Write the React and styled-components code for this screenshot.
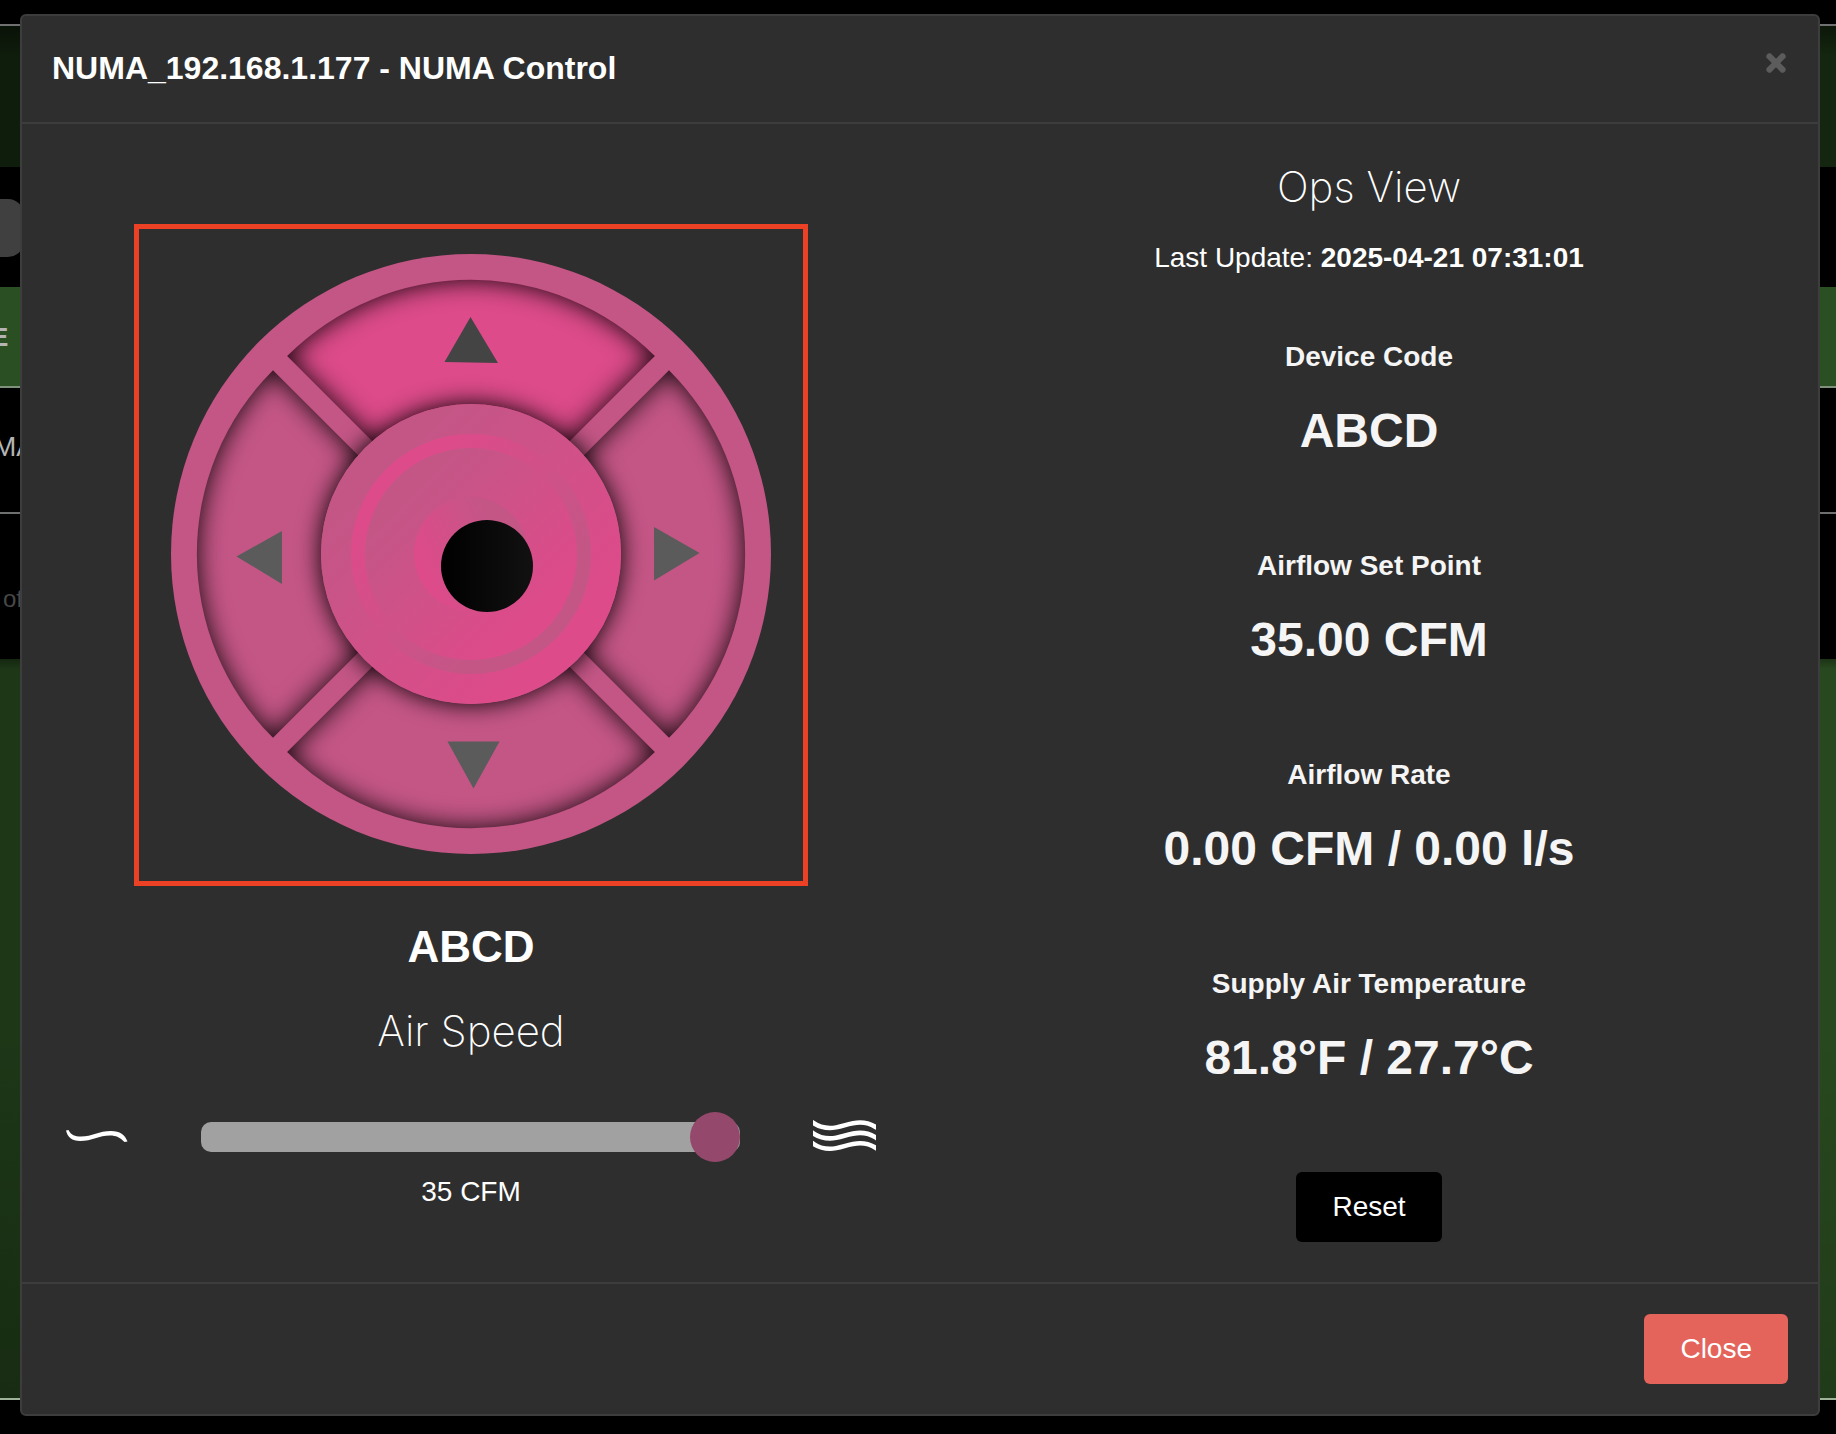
import React, { useState } from "react";
import styled, { createGlobalStyle } from "styled-components";

const GlobalStyle = createGlobalStyle`
  * { box-sizing: border-box; }
  body {
    margin: 0;
    background: #000;
    color: #fff;
    font-family: "Liberation Sans", Arial, sans-serif;
    font-size: 28px;
  }
  button, input { font: inherit; }
  h1, h2, h3, p, dl, dd { margin: 0; }
`;

const dull = "#c45686";
const vivid = "#dd4b8a";

const Stage = styled.div`
  display: grid;
  grid-template-columns: minmax(0, 1fr);
  min-height: 100vh;
`;

/* Dimmed page behind the dialog */
const Backdrop = styled.div`
  grid-area: 1 / 1;
  display: flex;
  flex-direction: column;
  overflow: hidden;
  white-space: nowrap;
  padding: 24px 0 34px;
`;

const Banner = styled.div`
  height: 143px;
  border-top: 2px solid #707070;
  background: linear-gradient(rgba(0, 0, 0, 0.4), rgba(0, 0, 0, 0) 30px),
    linear-gradient(90deg, #0f1d0c, #14260f);
`;

const Toolbar = styled.div`
  height: 120px;
  display: flex;
  align-items: center;
  padding-top: 2px;
`;

const Pill = styled.div`
  width: 24px;
  height: 58px;
  border-radius: 0 16px 16px 0;
  background: #404040;
`;

const HeadRow = styled.div`
  height: 101px;
  border-bottom: 2px solid #7f907b;
  background: #2a4f22;
  color: #b4b4b4;
  font-size: 26px;
  font-weight: bold;
  line-height: 100px;
  text-indent: -9px;
`;

const DataRow = styled.div`
  height: 126px;
  border-bottom: 2px solid #6e7070;
  color: #b4b4b4;
  line-height: 118px;
  text-indent: -7px;
`;

const PagerRow = styled.div`
  height: 145px;
  color: #484848;
  font-size: 24px;
  line-height: 170px;
  text-indent: 3px;
`;

const Lawn = styled.div`
  flex: 1;
  border-bottom: 2px solid #9fb39a;
  background: linear-gradient(rgba(0, 0, 0, 0.3), rgba(0, 0, 0, 0) 10px),
    linear-gradient(rgba(0, 0, 0, 0) 50%, rgba(0, 0, 0, 0.2)),
    linear-gradient(90deg, #1d3717, #28491f);
`;

const Dialog = styled.section`
  grid-area: 1 / 1;
  align-self: start;
  margin: 14px 16px 18px 20px;
  border: 2px solid #3d3d3d;
  border-radius: 6px;
  background: #2e2e2e;
`;

const Header = styled.header`
  display: flex;
  justify-content: space-between;
  align-items: flex-start;
  padding: 30px 30px 32px;
  border-bottom: 2px solid #3d3d3d;
`;

const Title = styled.h1`
  font-size: 32px;
  line-height: 44px;
`;

const DismissButton = styled.button`
  display: flex;
  padding: 5px 0;
  border: 0;
  background: none;
  color: #5c5c5c;
  cursor: pointer;
`;

const Body = styled.div`
  display: grid;
  grid-template-columns: 1fr 1fr;
`;

const ControlColumn = styled.div`
  display: flex;
  flex-direction: column;
  align-items: center;
  padding: 100px 44px 40px;
`;

const OpsColumn = styled.div`
  display: flex;
  flex-direction: column;
  align-items: center;
  padding: 33px 44px 40px;
`;

const DialFrame = styled.div`
  display: grid;
  justify-items: center;
  align-items: start;
  width: 674px;
  height: 662px;
  padding-top: 25px;
  border: 5px solid #ec4125;
`;

const Dial = styled.div`
  display: grid;
  place-items: center;
  width: 600px;
  height: 600px;
  border-radius: 50%;
  background: ${dull};
`;

const Pads = styled.div`
  grid-area: 1 / 1;
  display: grid;
  grid-template-columns: 260px 260px;
  grid-auto-rows: 260px;
  gap: 20px;
  transform: rotate(45deg);
`;

const Pad = styled.button`
  display: grid;
  place-items: center;
  padding: 0 22px 22px 0;
  border: 0;
  border-radius: 260px 0 0 0;
  background: ${(p) => (p.$active ? vivid : dull)};
  color: ${(p) => (p.$active ? "#444" : "#5b5b5b")};
  box-shadow: inset 0 0 26px rgba(0, 0, 0, 0.95);
  transform: rotate(${(p) => p.$turn}deg);
  cursor: pointer;
`;

const Arrow = styled.svg`
  overflow: visible;
  transform: rotate(-45deg);
`;

const Hub = styled.button`
  grid-area: 1 / 1;
  z-index: 1;
  display: block;
  width: 300px;
  height: 300px;
  padding: 0;
  border: 0;
  border-radius: 50%;
  background: none;
  box-shadow: 0 0 24px #000;
  cursor: pointer;
`;

const HubDrawing = styled.svg`
  display: block;
`;

const DeviceName = styled.h2`
  margin-top: 31px;
  font-size: 44px;
  line-height: 60px;
`;

const ThinHeading = styled.h2`
  font-family: Inter, "Liberation Sans", sans-serif;
  font-size: 42px;
  font-weight: 200;
  line-height: 60px;
`;

const SpeedHeading = styled(ThinHeading)`
  margin-top: 24px;
`;

const SliderRow = styled.div`
  align-self: stretch;
  display: flex;
  align-items: center;
  gap: 73px;
  height: 50px;
  margin: 51px 0 10px;
`;

const Slider = styled.input`
  appearance: none;
  flex: 1;
  min-width: 0;
  height: 30px;
  margin: 0;
  border-radius: 10px;
  background: #a1a1a1;
  &::-webkit-slider-thumb {
    appearance: none;
    width: 50px;
    height: 50px;
    border-radius: 50%;
    background: #94486b;
  }
`;

const Line = styled.p`
  line-height: 40px;
`;

const Updated = styled(Line)`
  margin-top: 21px;
`;

const Stats = styled.dl`
  display: flex;
  flex-direction: column;
  gap: 85px;
  padding: 59px 0 84px;
  color: #f5f5f5;
  font-weight: bold;
  text-align: center;
`;

const Label = styled.dt`
  line-height: 40px;
`;

const Value = styled.dd`
  margin-top: 24px;
  font-size: 48px;
  line-height: 60px;
`;

const Button = styled.button`
  height: 70px;
  padding: 0 36px;
  border: 0;
  border-radius: 6px;
  background: ${(p) => (p.$danger ? "#e4645c" : "#000")};
  color: #fff;
  cursor: pointer;
`;

const Footer = styled.footer`
  display: flex;
  justify-content: flex-end;
  padding: 30px;
  border-top: 2px solid #3d3d3d;
`;

const pads = [
  { name: "Up", turn: 0, points: "29.5,6.5 57,52.5 3.5,51.5" },
  { name: "Right", turn: 90, points: "29,15 56.5,60.5 3,60.5" },
  { name: "Left", turn: 270, points: "27.5,9 53,54.5 0,54.5" },
  { name: "Down", turn: 180, points: "27.5,9 53.5,56 1.5,56" },
];

const stats = [
  ["Device Code", "ABCD"],
  ["Airflow Set Point", "35.00 CFM"],
  ["Airflow Rate", "0.00 CFM / 0.00 l/s"],
  ["Supply Air Temperature", "81.8°F / 27.7°C"],
];

function HubArt() {
  return (
    <HubDrawing width="300" height="300" viewBox="0 0 300 300" aria-hidden="true">
      <defs>
        <linearGradient id="rise" x1="0.15" y1="0.15" x2="0.85" y2="0.85">
          <stop offset="0.1" stopColor={dull} />
          <stop offset="0.9" stopColor={vivid} />
        </linearGradient>
        <linearGradient id="fall" x1="0.15" y1="0.15" x2="0.85" y2="0.85">
          <stop offset="0.1" stopColor={vivid} />
          <stop offset="0.8" stopColor={dull} />
        </linearGradient>
        <linearGradient id="core" x1="0" y1="0.65" x2="0.9" y2="0.25">
          <stop offset="0.1" stopColor={vivid} />
          <stop offset="0.8" stopColor={dull} />
        </linearGradient>
        <linearGradient id="hole">
          <stop offset="0" stopColor="#000" />
          <stop offset="1" stopColor="#111" />
        </linearGradient>
      </defs>
      <circle cx="150" cy="150" r="150" fill="url(#rise)" />
      <circle cx="150" cy="150" r="120" fill="url(#fall)" />
      <circle cx="150" cy="150" r="106" fill="url(#rise)" />
      <circle cx="150" cy="150" r="57" fill="url(#core)" />
      <circle cx="166" cy="162" r="46" fill="url(#hole)" />
    </HubDrawing>
  );
}

function LowAirIcon() {
  return (
    <svg width="62" height="14" viewBox="0 0 62 14" aria-hidden="true">
      <path
        d="M0 .5 L2.5 0 C5 5 9 6.6 15 6.6 C26 6.6 33 1 45 1 C54 1 59 5 61.5 11.5 L58.5 12 C54 7.5 50 5.5 44 5.5 C33 5.5 26 11 14 11 C6 11 1.5 7 0 .5Z"
        fill="#fff"
      />
    </svg>
  );
}

function HighAirIcon() {
  const wave = "M-4 0 L0 2.7 C6 7 11 8 17 8 C28 8 35 2.5 47 2.5 C53 2.5 58 4 63 7.2 L67 10";
  return (
    <svg width="63" height="34" viewBox="0 0 63 34" aria-hidden="true">
      <g fill="none" stroke="#fff" strokeWidth="4.6">
        <path d={wave} />
        <path d={wave} transform="translate(0 10.4)" />
        <path d={wave} transform="translate(0 20.8)" />
      </g>
    </svg>
  );
}

export default function App() {
  const [speed, setSpeed] = useState(35);
  const [active, setActive] = useState("Up");

  return (
    <Stage>
      <GlobalStyle />
      <Backdrop>
        <Banner />
        <Toolbar>
          <Pill />
        </Toolbar>
        <HeadRow>E</HeadRow>
        <DataRow>MA</DataRow>
        <PagerRow>of</PagerRow>
        <Lawn />
      </Backdrop>

      <Dialog role="dialog" aria-labelledby="dialog-title">
        <Header>
          <Title id="dialog-title">NUMA_192.168.1.177 - NUMA Control</Title>
          <DismissButton aria-label="Dismiss">
            <svg width="24" height="24" viewBox="0 0 24 24" aria-hidden="true">
              <path
                d="M5 5 L19 19 M19 5 L5 19"
                stroke="currentColor"
                strokeWidth="5"
                strokeLinecap="round"
              />
              <path
                d="M4.2 4.2 L19.8 19.8 M19.8 4.2 L4.2 19.8"
                stroke="currentColor"
                strokeWidth="6"
              />
            </svg>
          </DismissButton>
        </Header>

        <Body>
          <ControlColumn>
            <DialFrame>
              <Dial>
                <Pads>
                  {pads.map((pad) => (
                    <Pad
                      key={pad.name}
                      aria-label={pad.name}
                      $turn={pad.turn}
                      $active={active === pad.name}
                      onClick={() => setActive(pad.name)}
                    >
                      <Arrow width="60" height="60" viewBox="0 0 60 60" aria-hidden="true">
                        <polygon points={pad.points} fill="currentColor" />
                      </Arrow>
                    </Pad>
                  ))}
                </Pads>
                <Hub aria-label="Center">
                  <HubArt />
                </Hub>
              </Dial>
            </DialFrame>
            <DeviceName>ABCD</DeviceName>
            <SpeedHeading>
              <label htmlFor="air-speed">Air Speed</label>
            </SpeedHeading>
            <SliderRow>
              <LowAirIcon />
              <Slider
                id="air-speed"
                type="range"
                min="0"
                max="35"
                value={speed}
                onChange={(e) => setSpeed(Number(e.target.value))}
              />
              <HighAirIcon />
            </SliderRow>
            <Line>{speed} CFM</Line>
          </ControlColumn>

          <OpsColumn>
            <ThinHeading>Ops View</ThinHeading>
            <Updated>
              Last Update: <strong>2025-04-21 07:31:01</strong>
            </Updated>
            <Stats>
              {stats.map(([label, value]) => (
                <div key={label}>
                  <Label>{label}</Label>
                  <Value>{value}</Value>
                </div>
              ))}
            </Stats>
            <Button>Reset</Button>
          </OpsColumn>
        </Body>

        <Footer>
          <Button $danger>Close</Button>
        </Footer>
      </Dialog>
    </Stage>
  );
}
